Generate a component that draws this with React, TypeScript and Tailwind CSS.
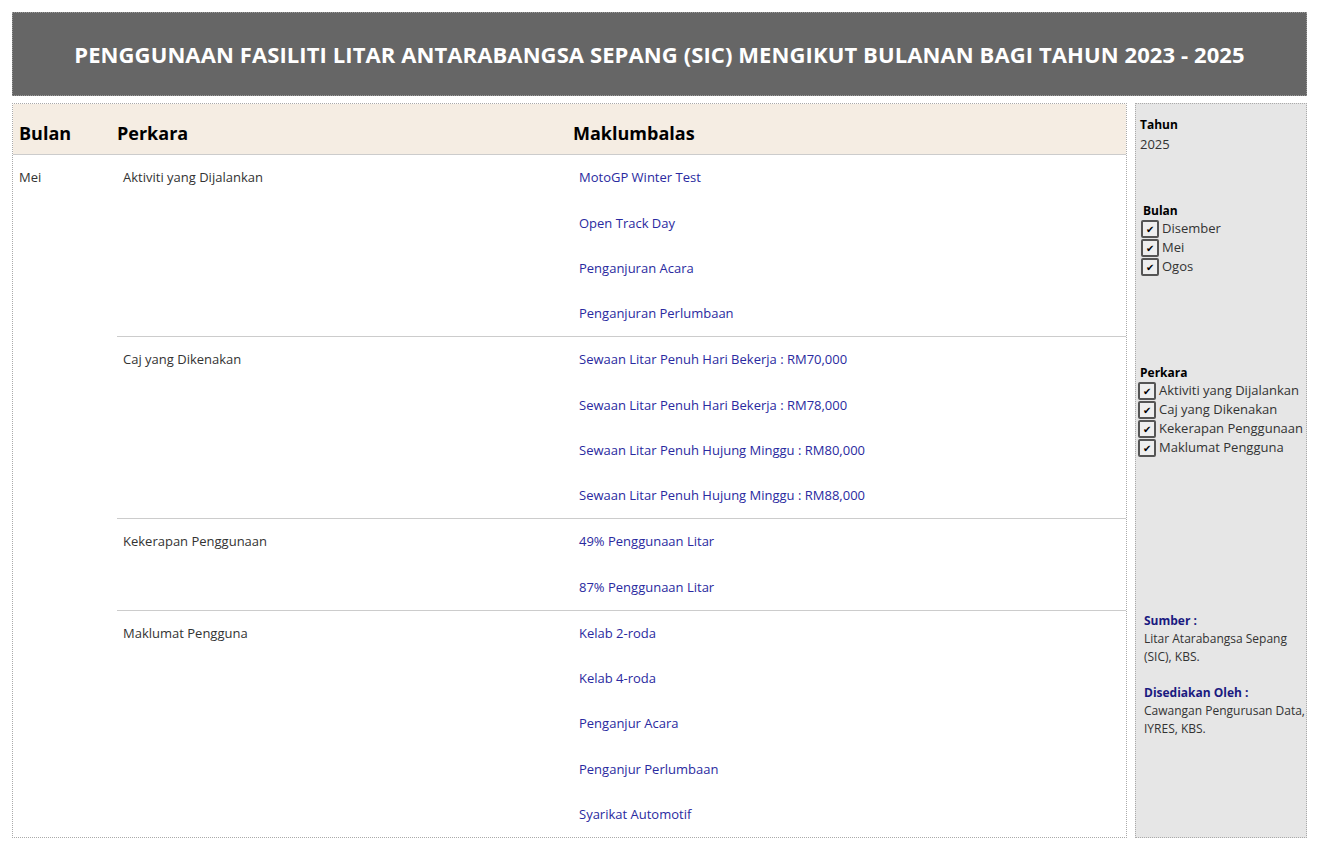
import React from 'react';

const groups = [
  { name: 'Aktiviti yang Dijalankan', items: ['MotoGP Winter Test', 'Open Track Day', 'Penganjuran Acara', 'Penganjuran Perlumbaan'] },
  { name: 'Caj yang Dikenakan', items: ['Sewaan Litar Penuh Hari Bekerja : RM70,000', 'Sewaan Litar Penuh Hari Bekerja : RM78,000', 'Sewaan Litar Penuh Hujung Minggu : RM80,000', 'Sewaan Litar Penuh Hujung Minggu : RM88,000'] },
  { name: 'Kekerapan Penggunaan', items: ['49% Penggunaan Litar', '87% Penggunaan Litar'] },
  { name: 'Maklumat Pengguna', items: ['Kelab 2-roda', 'Kelab 4-roda', 'Penganjur Acara', 'Penganjur Perlumbaan', 'Syarikat Automotif'] },
];

const Check: React.FC<{ label: string }> = ({ label }) => (
  <div className="flex items-center h-[19px]">
    <div className="w-[18px] h-[18px] border-2 border-[#555] rounded-[2px] flex items-center justify-center text-[10px] text-black bg-[#eee] mr-[3px]">✔</div>
    <span>{label}</span>
  </div>
);

export default function App() {
  return (
    <div className="w-[1319px] h-[849px] bg-white px-[12px] pt-[12px] text-[13px] text-[#333]" style={{ fontFamily: '"Open Sans", "Noto Sans", sans-serif' }}>
      <div className="h-[84px] bg-[#666666] border border-dotted border-[#999] flex items-center justify-center">
        <h1 className="text-white font-bold text-[22px] tracking-[0.1px]">PENGGUNAAN FASILITI LITAR ANTARABANGSA SEPANG (SIC) MENGIKUT BULANAN BAGI TAHUN 2023 - 2025</h1>
      </div>
      <div className="flex gap-[8px] mt-[7px] h-[735px]">
        <div className="w-[1115px] border border-dotted border-[#aaa] flex flex-col">
          <div className="h-[54px] bg-[#f5ede3] border-b border-[#ccc] flex items-end pb-[7px] text-[18px] font-bold text-black">
            <div className="w-[104px] pl-[6px]">Bulan</div>
            <div className="w-[456px]">Perkara</div>
            <div>Maklumbalas</div>
          </div>
          <div className="flex">
            <div className="w-[104px] pl-[6px] pt-[13px]">Mei</div>
            <div className="flex-1">
              {groups.map((g, gi) => (
                <div key={g.name} className={`flex ${gi < groups.length - 1 ? 'border-b border-[#ccc]' : ''}`}>
                  <div className="w-[462px] pl-[6px] pt-[13px]">{g.name}</div>
                  <div className="flex-1">
                    {g.items.map(it => (
                      <div key={it} className="h-[45.25px] pt-[13px] text-[#2a2aa0]">{it}</div>
                    ))}
                  </div>
                </div>
              ))}
            </div>
          </div>
        </div>
        <div className="w-[172px] bg-[#e6e6e6] border border-dotted border-[#aaa] pl-[4px] text-[#333]">
          <div className="mt-[12px] font-bold text-black text-[12px]">Tahun</div>
          <div className="mt-[1px]">2025</div>
          <div className="mt-[47px] pl-[3px] font-bold text-black text-[12px]">Bulan</div>
          <div className="pl-[1px]">
            <Check label="Disember" />
            <Check label="Mei" />
            <Check label="Ogos" />
          </div>
          <div className="mt-[87px] font-bold text-black text-[12px]">Perkara</div>
          <div className="-ml-[2px]">
            <Check label="Aktiviti yang Dijalankan" />
            <Check label="Caj yang Dikenakan" />
            <Check label="Kekerapan Penggunaan" />
            <Check label="Maklumat Pengguna" />
          </div>
          <div className="mt-[154px] pl-[4px] text-[12px] leading-[18px]">
            <div className="font-bold text-[#1a1a80]">Sumber :</div>
            <div>Litar Atarabangsa Sepang (SIC), KBS.</div>
            <div className="font-bold text-[#1a1a80] mt-[18px]">Disediakan Oleh :</div>
            <div>Cawangan Pengurusan Data, IYRES, KBS.</div>
          </div>
        </div>
      </div>
    </div>
  );
}
